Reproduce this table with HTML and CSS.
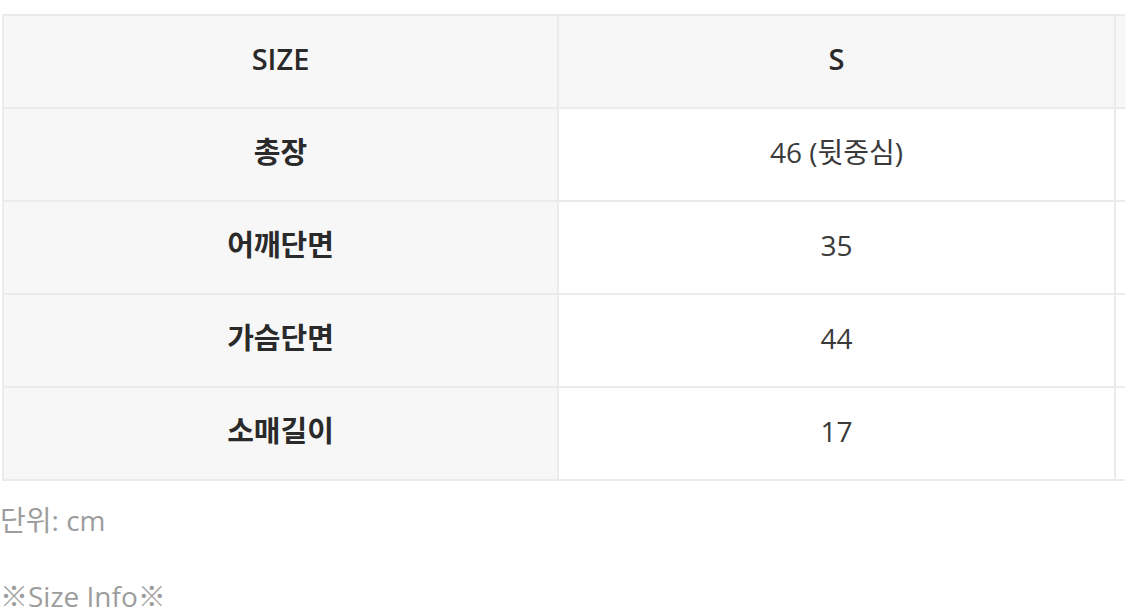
FILE: index.html
```html
<!DOCTYPE html>
<html lang="ko">
<head>
<meta charset="utf-8">
<link rel="stylesheet" href="styles.css">
</head>
<body>
<div class="page">
  <div class="table-wrap">
    <table class="size-table">
      <colgroup><col class="c1"><col class="c2"><col class="c3"></colgroup>
      <thead>
        <tr><th>SIZE</th><th>S</th><th></th></tr>
      </thead>
      <tbody>
        <tr><th>총장</th><td>46 (뒷중심)</td><td></td></tr>
        <tr><th>어깨단면</th><td>35</td><td></td></tr>
        <tr><th>가슴단면</th><td>44</td><td></td></tr>
        <tr><th>소매길이</th><td>17</td><td></td></tr>
      </tbody>
    </table>
  </div>
  <p class="unit">단위: cm</p>
  <p class="info">※Size Info※</p>
</div>
</body>
</html>
```
FILE: styles.css
```css
html, body {
  margin: 0;
  padding: 0;
  background: #fff;
  overflow: hidden;
}
body {
  font-family: "Open Sans", "Noto Sans CJK KR", sans-serif;
  width: 1125px;
  height: 613px;
}
.page {
  padding-top: 14px;
}
.table-wrap {
  overflow: hidden;
  width: 1125px;
  padding-left: 2px;
  box-sizing: border-box;
}
.size-table {
  border-collapse: collapse;
  table-layout: fixed;
  width: 1669px;
}
.size-table .c1 {
  width: 555px;
}
.size-table .c2 {
  width: 557px;
}
.size-table .c3 {
  width: 557px;
}
.size-table th,
.size-table td {
  border: 2px solid #ebebeb;
  height: 85px;
  padding: 0 0 6px;
  text-align: center;
  vertical-align: middle;
  font-size: 28px;
  line-height: 1;
}
.size-table th {
  background: #f7f7f7;
  color: #2a2a2a;
  font-weight: 700;
}
.size-table tbody th {
  font-size: 29px;
}
.size-table thead th {
  font-weight: 600;
  font-size: 29px;
}
.size-table td {
  background: #fff;
  color: #3a3a3a;
  font-weight: 400;
}
.unit,
.info {
  margin: 0;
  color: #9d9d9d;
  font-size: 28px;
  line-height: 1;
}
.unit {
  margin-top: 25px;
}
.info {
  margin-top: 48px;
}
```
